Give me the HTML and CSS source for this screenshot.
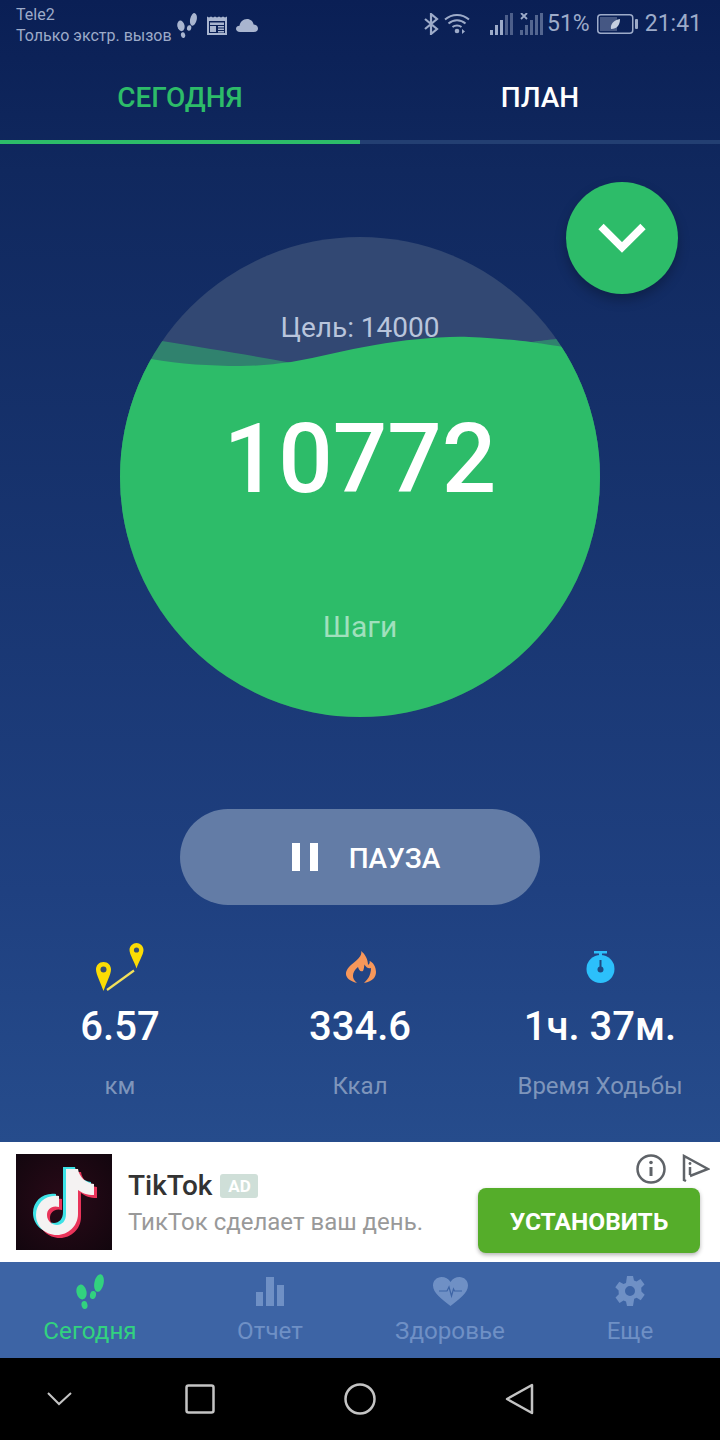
FILE: index.html
```html
<!DOCTYPE html>
<html lang="ru">
<head>
    <meta charset="UTF-8">
    <meta name="viewport" content="width=device-width, initial-scale=1.0">
    <title>Шаги</title>
    <link rel="stylesheet" href="styles.css">
</head>
<body>

<div class="screen">
    <div class="app">
        <div class="status">
            <div class="carrier">
                <div>Tele2</div>
                <div>Только экстр. вызов</div>
            </div>
            <div class="status-icons">
                <svg class="ic-feet" width="20" height="25" viewBox="0 0 28 35" fill="currentColor">
                    <ellipse cx="5.5" cy="18" rx="5" ry="7.5" transform="rotate(-12 5.5 18)"/>
                    <ellipse cx="8.5" cy="31" rx="3" ry="4" transform="rotate(-12 8.5 31)"/>
                    <ellipse cx="23" cy="9" rx="4.6" ry="9" transform="rotate(12 23 9)"/>
                    <ellipse cx="17" cy="21" rx="3" ry="4" transform="rotate(12 17 21)"/>
                </svg>
                <svg class="ic-news" width="20" height="19" viewBox="0 0 20 19" fill="currentColor">
                    <path fill-rule="evenodd" d="M0 0.5l2 1 2-1 2 1 2-1 2 1 2-1 2 1 2-1 2 1 2-1V19H0ZM2 5v12h16V5Z"/>
                    <rect x="3" y="6.500" width="14" height="2.500"/>
                    <rect x="3" y="10" width="6" height="6"/>
                    <rect x="11" y="10" width="6" height="1.500"/>
                    <rect x="11" y="12.500" width="6" height="1.500"/>
                    <rect x="11" y="15" width="6" height="1.500"/>
                </svg>
                <svg class="ic-cloud" width="22" height="13" viewBox="0 0 22 13" fill="currentColor">
                    <path d="M4 13C1.500 13 0 11.500 0 9.800 0 8 1.500 6.800 3.500 6.800 4 3 7 0 11 0c3.500 0 6 2.300 6.600 5.500 2.600.3 4.400 1.800 4.400 4 0 2-1.500 3.500-4 3.500Z"/>
                </svg>
            </div>
            <div class="status-right">
                <svg class="ic-bt" width="15" height="22" viewBox="0 0 15 22" fill="none" stroke="currentColor" stroke-width="2.200">
                    <path d="M1 6l12 10-6 5V1l6 5L1 16"/>
                </svg>
                <svg class="ic-wifi" width="26" height="22" viewBox="0 0 26 22" fill="none" stroke="currentColor" stroke-width="2">
                    <path d="M1 6.500C8 0.500 18 0.500 25 6.500"/>
                    <path d="M4.500 10.500C9.500 6 16.500 6 21.500 10.500"/>
                    <path d="M8.500 14C11 12 15 12 17.500 14"/>
                    <circle cx="13" cy="18" r="2.300" fill="currentColor" stroke="none"/>
                    <path d="M18 16v5l3-2.500Z" fill="currentColor" stroke="none"/>
                </svg>
                <svg class="ic-signal" width="23" height="22" viewBox="0 0 23 22" fill="currentColor">
                    <rect x="0" y="17" width="3" height="5"/>
                    <rect x="5" y="12" width="3" height="10"/>
                    <rect x="10" y="7" width="3" height="15"/>
                    <rect x="15" y="2" width="3" height="20" opacity=".45"/>
                    <rect x="20" y="0" width="3" height="22" opacity=".45"/>
                </svg>
                <svg class="ic-signal2" width="24" height="22" viewBox="0 0 24 22" fill="currentColor">
                    <path d="M1 0l6 6M7 0L1 6" stroke="currentColor" stroke-width="1.800"/>
                    <rect x="0" y="17" width="3" height="5" opacity=".5"/>
                    <rect x="5" y="12" width="3" height="10" opacity=".5"/>
                    <rect x="10" y="7" width="3" height="15" opacity=".5"/>
                    <rect x="15" y="2" width="3" height="20" opacity=".5"/>
                    <rect x="20" y="0" width="3" height="22" opacity=".5"/>
                </svg>
                <span class="status-text">51%</span>
                <svg class="ic-batt" width="41" height="20" viewBox="0 0 41 20">
                    <rect x="0.750" y="0.750" width="35" height="18.500" rx="3" fill="none" stroke="currentColor" stroke-width="1.500"/>
                    <rect x="3" y="3" width="17" height="14" fill="currentColor" opacity=".4"/>
                    <rect x="38" y="5" width="3" height="10" rx="1" fill="currentColor"/>
                    <path d="M14 15c-1-5 3-9 9-10 0 6-3 10-9 10Z" fill="#c6cfe0"/>
                </svg>
                <span class="status-text">21:41</span>
            </div>
        </div>

        <div class="tabs">
            <div class="tab active">СЕГОДНЯ</div>
            <div class="tab">ПЛАН</div>
        </div>

        <div class="main">
            <div class="fab">
                <svg width="48" height="30" viewBox="0 0 48 30" fill="none" stroke="#fff" stroke-width="7.500">
                    <path d="M3 3.500l21 21 21-21"/>
                </svg>
            </div>

            <div class="circle">
                <svg class="wave" width="480" height="480" viewBox="0 0 480 480">
                    <path d="M0 90L42 104C90 112 130 118 172 126L411 105C425 103 436 102 480 98V300H0Z" fill="#2dbc69" opacity=".5"/>
                    <path d="M0 118L31 122C60 127 90 129 120 129C140 129 155 127 171 125C200 120 225 113 255 108C285 103 320 99 349 100C375 101 395 103 411 105C425 107 435 109 480 115V480H0Z" fill="#2dbc69"/>
                </svg>
                <div class="goal">Цель: 14000</div>
                <div class="steps">10772</div>
                <div class="steps-label">Шаги</div>
            </div>

            <div class="pause">
                <span class="pause-bars"><i></i><i></i></span>
                <span class="pause-label">ПАУЗА</span>
            </div>

            <div class="stats">
                <div class="stat">
                    <div class="stat-icon">
                        <svg width="50" height="48" viewBox="0 0 50 48">
                            <path d="M8.500 19C4 19 1 22.500 1 26.500c0 5 5 14 7.500 21.500C11 40.500 16 31.500 16 26.500 16 22.500 13 19 8.500 19Z" fill="#fbdc04"/>
                            <circle cx="8.500" cy="26.500" r="3" fill="#3a4f6e"/>
                            <path d="M41.500 0C38 0 34.500 3 34.500 7c0 4.500 5 12 7 18.500C43.500 19 48.500 11.500 48.500 7c0-4-3.500-7-7-7Z" fill="#fbdc04"/>
                            <circle cx="41.500" cy="7" r="2.600" fill="#3a4f6e"/>
                            <path d="M12 47L39 27.500" stroke="#f3e05a" stroke-width="2.200"/>
                        </svg>
                    </div>
                    <div class="stat-value">6.57</div>
                    <div class="stat-label">км</div>
                </div>
                <div class="stat">
                    <div class="stat-icon">
                        <svg width="31" height="32" viewBox="0 0 31 32">
                            <path d="M16 0C18 6 10 10 4 16-2 23 1 29 12 32 6 27 7 21 13 16 14 19 15 21 18 20 19 18 19 16 19.500 13.500 21 16 23 18 26 17 26 25 22 29 19 32 28 30 31 26 31 21 31 16 28 11 24.500 10 25 12 24.500 13 23 14 23 8 20 3 16 0Z" fill="#f7975a"/>
                        </svg>
                    </div>
                    <div class="stat-value">334.6</div>
                    <div class="stat-label">Ккал</div>
                </div>
                <div class="stat">
                    <div class="stat-icon">
                        <svg width="29" height="32" viewBox="0 0 29 32">
                            <rect x="8" y="0" width="13" height="2.500" fill="#2cc0fb"/>
                            <rect x="13" y="2" width="3" height="3.500" fill="#2cc0fb"/>
                            <circle cx="14.500" cy="18" r="14" fill="#2cc0fb"/>
                            <rect x="13.500" y="9" width="2" height="9" fill="#1f4a82"/>
                            <circle cx="14.500" cy="18.500" r="3" fill="#1f4a82"/>
                        </svg>
                    </div>
                    <div class="stat-value">1ч. 37м.</div>
                    <div class="stat-label">Время Ходьбы</div>
                </div>
            </div>
        </div>
    </div>

    <div class="ad">
        <div class="ad-logo">
            <svg width="96" height="96" viewBox="0 0 96 96">
                <defs>
                    <path id="note" d="M50 15H62C63 23 70 29 78 30V41C71 41 66 39 62 36V60C62 72 52 81 41 81C29 81 20 72 20 61C20 49 30 40 43 42V53C36 51 31 55 31 61C31 67 36 71 41 71C46 71 50 67 50 60Z"/>
                </defs>
                <use href="#note" x="-3" y="-2" fill="#3de2e6"/>
                <use href="#note" x="3" y="3" fill="#e9345a"/>
                <use href="#note" fill="#f4f2f2"/>
            </svg>
        </div>
        <div class="ad-text">
            <div class="ad-title">TikTok <span class="ad-badge">AD</span></div>
            <div class="ad-desc">ТикТок сделает ваш день.</div>
        </div>
        <div class="ad-side">
            <div class="ad-marks">
                <svg width="30" height="30" viewBox="0 0 30 30" fill="none" stroke="#5f6368" stroke-width="2.500">
                    <circle cx="15" cy="15" r="13.500"/>
                    <path d="M15 13v9" stroke-width="3"/>
                    <circle cx="15" cy="8.500" r="1.800" fill="#5f6368" stroke="none"/>
                </svg>
                <svg width="28" height="30" viewBox="0 0 28 30" fill="none" stroke="#5f6368" stroke-width="2.500">
                    <path d="M4 27L2 26V2L26 15 8 22"/>
                    <path d="M8 13v8" stroke-width="2.500"/>
                    <circle cx="8" cy="9.500" r="1.400" fill="#5f6368" stroke="none"/>
                </svg>
            </div>
            <div class="install">УСТАНОВИТЬ</div>
        </div>
    </div>

    <div class="nav">
        <div class="nav-item active">
            <svg width="28" height="35" viewBox="0 0 28 35" fill="currentColor">
                <ellipse cx="5.500" cy="18" rx="5" ry="7.500" transform="rotate(-12 5.500 18)"/>
                <ellipse cx="8.500" cy="31" rx="3" ry="4" transform="rotate(-12 8.500 31)"/>
                <ellipse cx="23" cy="9" rx="4.600" ry="9" transform="rotate(12 23 9)"/>
                <ellipse cx="17" cy="21" rx="3" ry="4" transform="rotate(12 17 21)"/>
            </svg>
            <span>Сегодня</span>
        </div>
        <div class="nav-item">
            <svg width="28" height="35" viewBox="0 0 28 35" fill="currentColor">
                <rect x="0" y="18" width="7" height="14"/>
                <rect x="10" y="3" width="8" height="29"/>
                <rect x="21" y="11" width="7" height="21"/>
            </svg>
            <span>Отчет</span>
        </div>
        <div class="nav-item">
            <svg width="35" height="35" viewBox="0 0 35 35" fill="currentColor">
                <path d="M17.500 32C9 25 0 19 0 11.500 0 6.500 4 3 8.500 3c3.700 0 7 1.800 9 5 2-3.200 5.300-5 9-5C31 3 35 6.500 35 11.500 35 19 26 25 17.500 32Z"/>
                <path d="M6 17h8l2-4 2.500 9 2-7 1 2h7.500" fill="none" stroke="#3d64a5" stroke-width="1.200"/>
            </svg>
            <span>Здоровье</span>
        </div>
        <div class="nav-item">
            <svg width="30" height="35" viewBox="0 0 30 35" fill="currentColor">
                <path fill-rule="evenodd" d="M12 2h6l1 4.500 2.500 1L25.500 5l4 5.500-3.300 3.300.2 2.700v1l3.300 3.300-4 5.500-4-2.500-2.500 1L18 32h-6l-1-4.500-2.500-1L4.500 29l-4-5.500 3.300-3.300-.2-2.700v-1L.3 13.200l4-5.500 4.200 2.300 2.500-1ZM15 12a5 5 0 1 0 0 10 5 5 0 0 0 0-10Z"/>
            </svg>
            <span>Еще</span>
        </div>
    </div>

    <div class="softkeys">
        <svg width="28" height="18" viewBox="0 0 28 18" fill="none" stroke="#c4c4c4" stroke-width="2">
            <path d="M2 3l11 11L25 3"/>
        </svg>
        <svg width="30" height="30" viewBox="0 0 30 30" fill="none" stroke="#c4c4c4" stroke-width="2.500">
            <rect x="1.500" y="1.500" width="27" height="27" rx="2"/>
        </svg>
        <svg width="32" height="32" viewBox="0 0 32 32" fill="none" stroke="#c4c4c4" stroke-width="2.500">
            <circle cx="16" cy="16" r="14.500"/>
        </svg>
        <svg width="30" height="32" viewBox="0 0 30 32" fill="none" stroke="#c4c4c4" stroke-width="2.500" stroke-linejoin="round">
            <path d="M27 2V30L2 16Z"/>
        </svg>
    </div>
</div>

</body>
</html>
```

FILE: styles.css
```css
html, body {
    margin: 0;
    padding: 0;
}
body {
    font-family: Roboto, "Noto Sans", sans-serif;
    background-color: #000;
}
.screen {
    width: 720px;
    height: 1440px;
    overflow: hidden;
    display: flex;
    flex-direction: column;
}
.app {
    height: 1142px;
    background: linear-gradient(180deg, #0a1f55 0%, #10285e 15%, #1f4080 78%, #264c8c 100%);
}

/* status bar */
.status {
    height: 54px;
    display: flex;
    align-items: flex-start;
    color: #9dabc9;
    box-sizing: border-box;
    padding: 4px 18px 0 16px;
}
.carrier {
    font-size: 16px;
    line-height: 21px;
}
.status-icons {
    display: flex;
    align-items: center;
    margin: 9px 0 0 5px;
    height: 24px;
    color: #a9b5cf;
}
.ic-news {
    margin-left: 10px;
}
.ic-cloud {
    margin-left: 9px;
}
.status-right {
    display: flex;
    align-items: center;
    margin: 9px 0 0 auto;
    height: 22px;
}
.status-text {
    font-size: 23px;
    line-height: 24px;
}
.ic-bt {
    margin-right: 5px;
}
.ic-wifi {
    margin-right: 20px;
}
.ic-signal {
    margin-right: 7px;
}
.ic-signal2 {
    margin-right: 3px;
}
.ic-batt {
    margin: 0 7px;
}

/* tabs */
.tabs {
    display: flex;
    height: 90px;
}
.tab {
    flex: 1;
    text-align: center;
    font-size: 28px;
    font-weight: 500;
    line-height: 88px;
    color: #fff;
    border-bottom: 4px solid #233f72;
    box-sizing: border-box;
}
.tab.active {
    color: #2dbc69;
    border-bottom-color: #2dbc69;
}

/* main */
.main {
    position: relative;
    padding-top: 93px;
}
.fab {
    position: absolute;
    top: 38px;
    left: 566px;
    width: 112px;
    height: 112px;
    border-radius: 50%;
    background-color: #2dbc69;
    box-shadow: 0 6px 12px rgba(0,0,0,0.25);
    display: flex;
    align-items: center;
    justify-content: center;
}
.circle {
    position: relative;
    width: 480px;
    height: 480px;
    margin: 0 auto;
    border-radius: 50%;
    overflow: hidden;
    background-color: #324873;
    text-align: center;
}
.wave {
    position: absolute;
    top: 0;
    left: 0;
}
.goal, .steps, .steps-label {
    position: relative;
}
.goal {
    padding-top: 74px;
    font-size: 28px;
    line-height: 34px;
    color: #b9c5dc;
}
.steps {
    margin-top: 54px;
    font-size: 96px;
    font-weight: 500;
    line-height: 120px;
    color: #fff;
}
.steps-label {
    margin-top: 90px;
    font-size: 30px;
    line-height: 36px;
    color: #a0e0bd;
}

.pause {
    width: 360px;
    height: 96px;
    margin: 92px auto 0;
    padding-left: 12px;
    box-sizing: border-box;
    border-radius: 48px;
    background-color: #637ca6;
    display: flex;
    align-items: center;
    justify-content: center;
    color: #fff;
    font-size: 28px;
    font-weight: 500;
}
.pause-bars {
    display: flex;
    gap: 10px;
    margin-right: 31px;
}
.pause-bars i {
    width: 8px;
    height: 28px;
    background-color: #fff;
}
.pause-label {
    margin-top: 2px;
}

/* stats */
.stats {
    display: flex;
    margin-top: 38px;
}
.stat {
    flex: 1;
    text-align: center;
}
.stat-icon {
    height: 48px;
    display: flex;
    align-items: center;
    justify-content: center;
}
.stat-value {
    margin-top: 12px;
    font-size: 40px;
    font-weight: 500;
    line-height: 48px;
    color: #fff;
}
.stat-label {
    margin-top: 20px;
    font-size: 24px;
    line-height: 30px;
    color: #7e95bb;
}

/* ad */
.ad {
    height: 120px;
    background-color: #fff;
    display: flex;
    box-sizing: border-box;
    padding: 12px 20px 0 16px;
}
.ad-logo {
    width: 96px;
    height: 96px;
    background: radial-gradient(circle, #2a0a18 0%, #12060e 100%);
}
.ad-logo svg {
    display: block;
}
.ad-text {
    margin-left: 16px;
    flex: 1;
}
.ad-title {
    margin-top: 12px;
    font-size: 28px;
    font-weight: 500;
    line-height: 40px;
    color: #333;
    display: flex;
    align-items: center;
    gap: 8px;
}
.ad-badge {
    width: 38px;
    height: 24px;
    border-radius: 3px;
    background-color: #cfdfd8;
    color: #fff;
    font-size: 17px;
    font-weight: 700;
    line-height: 24px;
    text-align: center;
}
.ad-desc {
    font-size: 24px;
    line-height: 32px;
    color: #999;
}
.ad-side {
    width: 222px;
}
.ad-marks {
    display: flex;
    justify-content: flex-end;
    gap: 16px;
    height: 30px;
    margin: 0 -10px 4px 0;
}
.install {
    height: 65px;
    border-radius: 8px;
    background-color: #55ad2a;
    box-shadow: 0 2px 4px rgba(0,0,0,0.3);
    color: #fff;
    font-size: 24.500px;
    font-weight: 700;
    line-height: 68px;
    text-align: center;
}

/* bottom nav */
.nav {
    height: 96px;
    background-color: #3d64a5;
    display: flex;
}
.nav-item {
    flex: 1;
    display: flex;
    flex-direction: column;
    align-items: center;
    color: #6f90c5;
    font-size: 24.200px;
    padding-top: 12px;
    box-sizing: border-box;
}
.nav-item svg {
    display: block;
    height: 35px;
}
.nav-item span {
    margin-top: 6px;
    line-height: 32px;
}
.nav-item.active {
    color: #32d27f;
}
.softkeys {
    height: 82px;
    background-color: #000;
    display: grid;
    grid-template-columns: 120px 160px 160px 160px;
    justify-items: center;
    align-items: center;
}
```
